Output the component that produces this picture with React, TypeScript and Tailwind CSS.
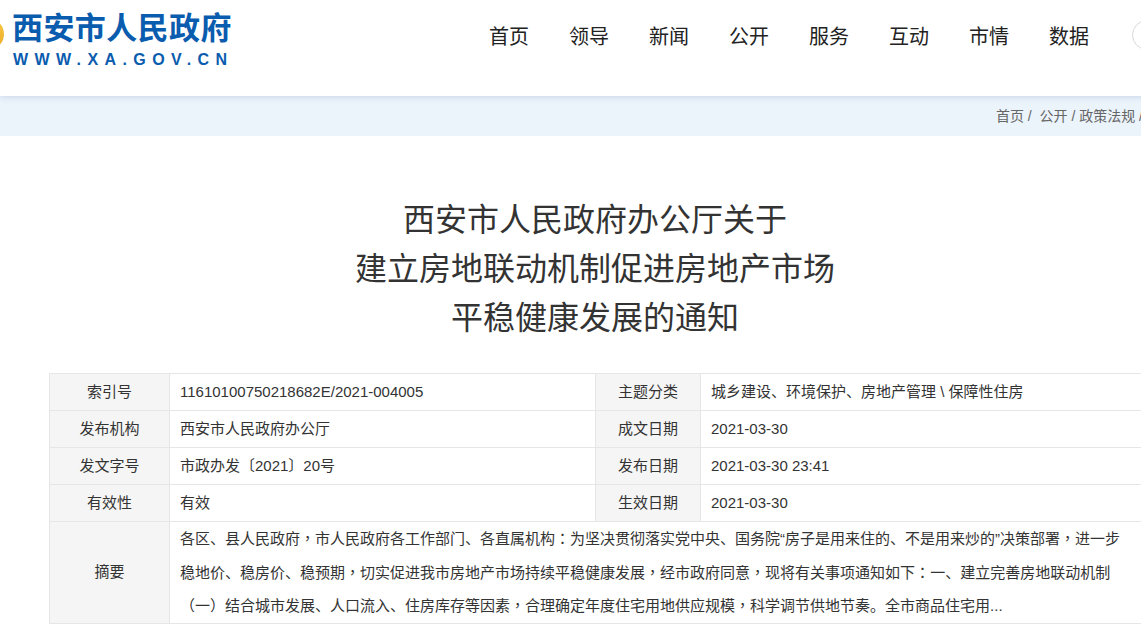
const navItems = ['首页', '领导', '新闻', '公开', '服务', '互动', '市情', '数据'];

const metaRows = [
  ['索引号', '11610100750218682E/2021-004005', '主题分类', '城乡建设、环境保护、房地产管理 \\ 保障性住房'],
  ['发布机构', '西安市人民政府办公厅', '成文日期', '2021-03-30'],
  ['发文字号', '市政办发〔2021〕20号', '发布日期', '2021-03-30 23:41'],
  ['有效性', '有效', '生效日期', '2021-03-30'],
];

const labelCell = 'border border-[#e6e6e6] bg-[#f5f5f5] text-center font-normal';
const valueCell = 'border border-[#e6e6e6] pl-[10px] text-left font-normal whitespace-nowrap';

// the reference centres these marks in their box, which the TC cut of the font does
function Mark({ children }: { children: string }) {
  return <span className="font-['Noto_Sans_CJK_TC']">{children}</span>;
}

export default function App() {
  return (
    <div className="w-[1141px] h-[642px] overflow-hidden bg-white font-['Liberation_Sans','Noto_Sans_CJK_SC',sans-serif] text-[15px] text-[#333]">
      <header className="relative z-10 flex h-[96px] w-[1192px] items-start bg-white shadow-[0_1px_6px_rgba(150,180,210,0.45)]">
        <div className="mt-[18px] ml-[-28px] h-[32px] w-[32px] shrink-0 rounded-full bg-gradient-to-b from-[#f7c948] to-[#eda921]" />
        <div className="ml-[8px] mt-[9px] w-[230px] shrink-0">
          <div className="text-[31px] leading-[40px] font-bold tracking-[0.4px] whitespace-nowrap text-[#0a5cae]">西安市人民政府</div>
          <div className="mt-[1px] ml-[1px] text-[16px] leading-[20px] font-bold tracking-[6.4px] whitespace-nowrap text-[#0a5cae]">WWW.XA.GOV.CN</div>
        </div>
        <nav className="ml-[247px] mt-[22px] flex shrink-0 gap-[40px] text-[20px] leading-[30px] text-[#222]">
          {navItems.map((item) => (
            <span key={item} className="whitespace-nowrap">{item}</span>
          ))}
        </nav>
        <div className="ml-[43px] mt-[20px] h-[30px] w-[30px] shrink-0 rounded-full border border-[#d9d9d9]" />
      </header>

      <div className="flex h-[40px] items-center justify-end bg-[#ebf3fb] text-[14px] text-[#666] whitespace-nowrap">
        <span className="mr-[-2px]">首页 /&nbsp;&nbsp;公开 / 政策法规 /</span>
      </div>

      <h1 className="mt-[60px] w-[1190px] text-center text-[32px] leading-[49px] font-normal text-[#333]">
        西安市人民政府办公厅关于
        <br />
        建立房地联动机制促进房地产市场
        <br />
        平稳健康发展的通知
      </h1>

      <table className="mt-[30px] ml-[49px] w-[1094px] table-fixed border-collapse">
        <colgroup>
          <col className="w-[120px]" />
          <col className="w-[426px]" />
          <col className="w-[105px]" />
          <col />
        </colgroup>
        <tbody>
          {metaRows.map((row) => (
            <tr key={row[0]} className="h-[37px]">
              <th className={labelCell}>{row[0]}</th>
              <td className={valueCell}>{row[1]}</td>
              <th className={labelCell}>{row[2]}</th>
              <td className={valueCell}>{row[3]}</td>
            </tr>
          ))}
          <tr className="h-[100px]">
            <th className={labelCell}>摘要</th>
            <td colSpan={3} className="border border-[#e6e6e6] pl-[10px] leading-[32.5px] whitespace-nowrap">
              各区、县人民政府<Mark>，</Mark>市人民政府各工作部门、各直属机构<Mark>：</Mark>为坚决贯彻落实党中央、国务院“房子是用来住的、不是用来炒的”决策部署<Mark>，</Mark>进一步
              <br />
              稳地价、稳房价、稳预期<Mark>，</Mark>切实促进我市房地产市场持续平稳健康发展<Mark>，</Mark>经市政府同意<Mark>，</Mark>现将有关事项通知如下<Mark>：</Mark>一、建立完善房地联动机制
              <br />
              （一）结合城市发展、人口流入、住房库存等因素<Mark>，</Mark>合理确定年度住宅用地供应规模<Mark>，</Mark>科学调节供地节奏。全市商品住宅用...
            </td>
          </tr>
        </tbody>
      </table>
    </div>
  );
}
